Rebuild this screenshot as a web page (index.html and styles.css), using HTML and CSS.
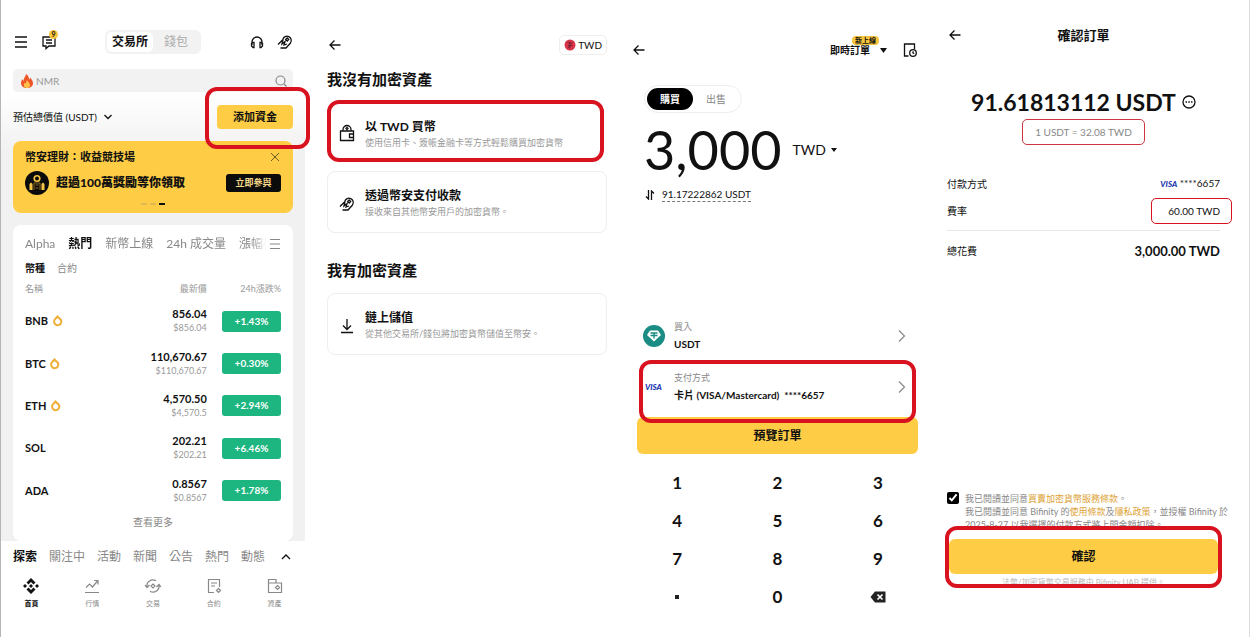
FILE: index.html
```html
<!DOCTYPE html>
<html lang="zh-Hant">
<head>
    <meta charset="UTF-8">
    <title>添加資金</title>
    <link rel="stylesheet" href="styles.css">
</head>
<body>
    <div class="screens">

        <!-- home -->
        <section class="screen home">
            <div class="home-top">
                <header class="home-header">
                    <div class="group">
                        <button class="icon-btn" aria-label="選單">
                            <svg width="16" height="16" viewBox="0 0 16 16" class="line"><path d="M2 3h12M2 8h12M2 13h12"/></svg>
                        </button>
                        <button class="icon-btn chat" aria-label="訊息">
                            <svg width="16" height="16" viewBox="0 0 16 16" class="line"><path d="M2 3h12v9H8l-3 2.500V12H2zM5 6h6M5 9h6"/></svg>
                            <span class="count">9</span>
                        </button>
                    </div>
                    <div class="switch">
                        <button class="active">交易所</button>
                        <button>錢包</button>
                    </div>
                    <div class="group right">
                        <button class="icon-btn" aria-label="客服">
                            <svg width="16" height="16" viewBox="0 0 16 16" class="line"><path d="M3 11V8a5 5 0 0 1 10 0v3M3 8.500h2v5H4L2.500 12V9.500zM13 8.500h-2v5h1l1.500-1.500V9.500z"/></svg>
                        </button>
                        <button class="icon-btn" aria-label="支付">
                            <svg width="16" height="16" viewBox="0 0 16 16" class="line"><path d="M1 10.500L6 5.500M5.800 5.500a4.300 4.300 0 1 1 7.700 3.500L9 14H3.500M6 5.500L5 10l3-2.500L7 11l3-1M10.200 4l1.500 1.500L10.200 7 8.700 5.500z"/></svg>
                        </button>
                    </div>
                </header>
                <div class="search">
                    <svg width="12" height="14" viewBox="0 0 12 14"><path d="M5 0c3 2 3 4 3 5.500.7-.4 1-1.200 1-2 2 2 3 4 3 5.700C12 12 9.500 14 6 14S0 12 0 9c0-2 1-3 1.700-4 .2 1 .5 1.500 1 1.800C2.500 4 4.500 3 5 0z" fill="#ee5527"/><path d="M6 6c.5 1.500 3 3 3 5 0 1.700-1.200 3-3 3s-3.200-1.200-3.200-3c0-1.200.6-1.900 1.200-2.500.3.8.6 1 1 1.200C5 8.500 5.200 7 6 6z" fill="#ffc34a"/></svg>
                    <input type="text" placeholder="NMR" aria-label="搜尋">
                    <svg width="14" height="14" viewBox="0 0 14 14" class="line grey"><circle cx="6.500" cy="6.500" r="4.500"/><path d="M10 10l2.500 2.500"/></svg>
                </div>
            </div>

            <div class="home-body">
                <div class="balance">
                    <button class="balance-label">預估總價值 (USDT)
                        <svg width="10" height="10" viewBox="0 0 10 10" class="line"><path d="M1.500 3l3.500 3.500L8.500 3"/></svg>
                    </button>
                    <div class="marked"><button class="add-funds">添加資金</button></div>
                </div>

                <div class="banner">
                    <div class="banner-title">
                        <span>幣安理財：收益競技場</span>
                        <button class="icon-btn" aria-label="關閉">
                            <svg width="12" height="12" viewBox="0 0 12 12" class="line thin"><path d="M2 2l8 8M10 2l-8 8"/></svg>
                        </button>
                    </div>
                    <div class="banner-main">
                        <svg width="24" height="24" viewBox="0 0 24 24"><circle cx="12" cy="12" r="12" fill="#0b0b0b"/><circle cx="12" cy="7.500" r="2.800" fill="none" stroke="#f6c544" stroke-width="1.600"/><path d="M4.500 19v-6l1.500-1.500L7.500 13v6M16.500 19v-6l1.500-1.500 1.500 1.500v6" fill="#f6c544"/><path d="M9 19v-7h6v7M10.500 14h3M10.500 17h3" stroke="#8b6c22" fill="none"/></svg>
                        <strong>超過100萬獎勵等你領取</strong>
                        <button>立即參與</button>
                    </div>
                    <div class="dots"><i></i><i></i><i class="on"></i></div>
                </div>

                <div class="market">
                    <div class="market-tabs">
                        <div class="tabs fade">
                            <button>Alpha</button>
                            <button class="active">熱門</button>
                            <button>新幣上線</button>
                            <button>24h 成交量</button>
                            <button>漲幅榜</button>
                        </div>
                        <button class="icon-btn" aria-label="更多">
                            <svg width="12" height="12" viewBox="0 0 12 12" class="line grey"><path d="M1 1.500h10M1 6h10M1 10.500h10"/></svg>
                        </button>
                    </div>
                    <div class="tabs small">
                        <button class="active">幣種</button>
                        <button>合約</button>
                    </div>
                    <table>
                        <thead>
                            <tr><th>名稱</th><th>最新價</th><th>24h漲跌%</th></tr>
                        </thead>
                        <tbody>
                            <tr>
                                <td>BNB <svg width="10" height="12" viewBox="0 0 10 12" class="hot"><path d="M4.500 1.500L6 3.200a3.600 3.600 0 1 1-3.500.5z"/></svg></td>
                                <td>856.04<small>$856.04</small></td>
                                <td><span class="change">+1.43%</span></td>
                            </tr>
                            <tr>
                                <td>BTC <svg width="10" height="12" viewBox="0 0 10 12" class="hot"><path d="M4.500 1.500L6 3.200a3.600 3.600 0 1 1-3.500.5z"/></svg></td>
                                <td>110,670.67<small>$110,670.67</small></td>
                                <td><span class="change">+0.30%</span></td>
                            </tr>
                            <tr>
                                <td>ETH <svg width="10" height="12" viewBox="0 0 10 12" class="hot"><path d="M4.500 1.500L6 3.200a3.600 3.600 0 1 1-3.500.5z"/></svg></td>
                                <td>4,570.50<small>$4,570.5</small></td>
                                <td><span class="change">+2.94%</span></td>
                            </tr>
                            <tr>
                                <td>SOL</td>
                                <td>202.21<small>$202.21</small></td>
                                <td><span class="change">+6.46%</span></td>
                            </tr>
                            <tr>
                                <td>ADA</td>
                                <td>0.8567<small>$0.8567</small></td>
                                <td><span class="change">+1.78%</span></td>
                            </tr>
                        </tbody>
                    </table>
                    <button class="more">查看更多</button>
                </div>
            </div>

            <div class="discover">
                <div class="tabs">
                    <button class="active">探索</button>
                    <button>關注中</button>
                    <button>活動</button>
                    <button>新聞</button>
                    <button>公告</button>
                    <button>熱門</button>
                    <button>動態</button>
                </div>
                <button class="icon-btn" aria-label="展開">
                    <svg width="12" height="12" viewBox="0 0 12 12" class="line"><path d="M2 8l4-4 4 4"/></svg>
                </button>
            </div>
            <nav class="bottom-nav">
                <a href="#" class="active">
                    <svg width="16" height="16" viewBox="0 0 16 16" fill="#111"><path d="M8 0l4.500 4.500-2 2L8 4 5.500 6.500l-2-2zM8 16l4.500-4.500-2-2L8 12 5.500 9.500l-2 2zM8 6l2 2-2 2-2-2zM2 6l2 2-2 2-2-2zM14 6l2 2-2 2-2-2z"/></svg>
                    首頁
                </a>
                <a href="#">
                    <svg width="16" height="16" viewBox="0 0 16 16" class="line grey"><path d="M1 14.500h14M2 9.500l3.500-3.500 3 3 5-6M10 2.500h4v4"/></svg>
                    行情
                </a>
                <a href="#">
                    <svg width="18" height="16" viewBox="0 0 18 16" class="line grey"><path d="M3 9a6 6 0 0 1 9-6.200M15 7a6 6 0 0 1-9 6.200M1 7l2 2.500L5.500 7M12.500 9L15 6.500 17 9M9 6l2 2-2 2-2-2z"/></svg>
                    交易
                </a>
                <a href="#">
                    <svg width="16" height="16" viewBox="0 0 16 16" class="line grey"><path d="M8 14.500H2.500v-13h11V9M5 5h6M5 8h4M12.500 10.500l2 2-2 2-2-2z"/></svg>
                    合約
                </a>
                <a href="#">
                    <svg width="16" height="16" viewBox="0 0 16 16" class="line grey"><path d="M1.500 5h13v9.500h-13v-13H9V5M10.500 7.500l2 2-2 2-2-2z"/></svg>
                    資產
                </a>
            </nav>
        </section>

        <!-- funding method -->
        <section class="screen method">
            <header class="bar">
                <button class="icon-btn" aria-label="返回">
                    <svg width="16" height="16" viewBox="0 0 16 16" class="line"><path d="M13.500 8H3M7.500 3.500L3 8l4.500 4.500"/></svg>
                </button>
                <button class="currency">
                    <svg width="12" height="12" viewBox="0 0 12 12"><circle cx="6" cy="6" r="5.500" fill="#d8354a"/><path d="M3.500 4h5M4 6.500h4.500M6 2.500v7M4 9l2-2.500" stroke="#7c2130" fill="none"/></svg>
                    TWD
                </button>
            </header>
            <h2>我沒有加密資產</h2>
            <a href="#" class="option highlight">
                <svg width="16" height="18" viewBox="0 0 16 18" class="line"><path d="M1.500 7h13v9.500h-13zM4 7V5.500a4 4 0 0 1 8 0V7M14.500 10h-4v3.500h4M8 3.500l1 1-1 1-1-1z"/></svg>
                <span class="option-text"><b>以 TWD 買幣</b><small>使用信用卡、簽帳金融卡等方式輕鬆購買加密貨幣</small></span>
            </a>
            <a href="#" class="option">
                <svg width="16" height="16" viewBox="0 0 16 16" class="line"><path d="M1 10.500L6 5.500M5.800 5.500a4.300 4.300 0 1 1 7.700 3.500L9 14H3.500M6 5.500L5 10l3-2.500L7 11l3-1M10.200 4l1.500 1.500L10.200 7 8.700 5.500z"/></svg>
                <span class="option-text"><b>透過幣安支付收款</b><small>接收來自其他幣安用戶的加密貨幣。</small></span>
            </a>
            <h2>我有加密資產</h2>
            <a href="#" class="option">
                <svg width="16" height="16" viewBox="0 0 16 16" class="line"><path d="M8 1v10M4 7.500L8 11.500l4-4M2 14.500h12"/></svg>
                <span class="option-text"><b>鏈上儲值</b><small>從其他交易所/錢包將加密貨幣儲值至幣安。</small></span>
            </a>
        </section>

        <!-- buy -->
        <section class="screen buy">
            <header class="bar">
                <button class="icon-btn" aria-label="返回">
                    <svg width="16" height="16" viewBox="0 0 16 16" class="line"><path d="M13.500 8H3M7.500 3.500L3 8l4.500 4.500"/></svg>
                </button>
                <div class="group">
                    <button class="order-type">即時訂單<span class="new">新上線</span>
                        <svg width="7" height="5" viewBox="0 0 7 5"><path d="M0 0h7L3.500 5z" fill="#111"/></svg>
                    </button>
                    <button class="icon-btn" aria-label="歷史訂單">
                        <svg width="16" height="16" viewBox="0 0 16 16" class="line"><path d="M6.500 14H2.500V2h10v5"/><circle cx="11" cy="11" r="3.300"/><path d="M11 9.200V11l1.200.8"/></svg>
                    </button>
                </div>
            </header>
            <div class="side">
                <button class="active">購買</button>
                <button>出售</button>
            </div>
            <div class="amount">
                <span class="value">3,000</span>
                <button class="unit">TWD
                    <svg width="6" height="4" viewBox="0 0 6 4"><path d="M0 0h6L3 4z" fill="#111"/></svg>
                </button>
            </div>
            <div class="converted">
                <svg width="10" height="10" viewBox="0 0 10 10" class="line"><path d="M3.500 0v9L1 6.500M6.500 10V1L9 3.500"/></svg>
                <span>91.17222862 USDT</span>
            </div>

            <div class="buy-bottom">
                <a href="#" class="field">
                    <svg width="22" height="22" viewBox="0 0 22 22"><circle cx="11" cy="11" r="11" fill="#1a8c84"/><path d="M7 5.500h8l3 4.500-7 6.500L4 10z" fill="#fff"/><path d="M7.500 8h7M11 8v5.500M7.500 10.500h7" stroke="#1a8c84" stroke-width="1.400" fill="none"/></svg>
                    <span class="field-text"><small>買入</small><b>USDT</b></span>
                    <svg width="10" height="14" viewBox="0 0 10 14" class="line grey"><path d="M2 1.500L7.500 7 2 12.500"/></svg>
                </a>
                <a href="#" class="field highlight">
                    <span class="visa">VISA</span>
                    <span class="field-text"><small>支付方式</small><b>卡片 (VISA/Mastercard)&nbsp; ****6657</b></span>
                    <svg width="10" height="14" viewBox="0 0 10 14" class="line grey"><path d="M2 1.500L7.500 7 2 12.500"/></svg>
                </a>
                <button class="primary preview">預覽訂單</button>
                <div class="keypad">
                    <button>1</button><button>2</button><button>3</button>
                    <button>4</button><button>5</button><button>6</button>
                    <button>7</button><button>8</button><button>9</button>
                    <button aria-label="小數點"><svg width="4" height="4" viewBox="0 0 4 4"><path d="M0 0h4v4H0z" fill="#222"/></svg></button>
                    <button>0</button>
                    <button aria-label="刪除"><svg width="16" height="12" viewBox="0 0 16 12"><path d="M5 .5h10.500v11H5L.5 6z" fill="#222"/><path d="M7.500 3.500l5 5M12.500 3.500l-5 5" stroke="#fff" stroke-width="1.600"/></svg></button>
                </div>
            </div>
        </section>

        <!-- confirm -->
        <section class="screen confirm">
            <header class="bar">
                <button class="icon-btn" aria-label="返回">
                    <svg width="16" height="16" viewBox="0 0 16 16" class="line"><path d="M13.500 8H3M7.500 3.500L3 8l4.500 4.500"/></svg>
                </button>
                <h1>確認訂單</h1>
            </header>
            <div class="receive">
                <strong>91.61813112 USDT</strong>
                <svg width="14" height="14" viewBox="0 0 14 14" class="line"><circle cx="7" cy="7" r="6"/><path d="M3.500 7H5M6.300 7h1.500M9 7h1.500"/></svg>
            </div>
            <div class="rate">1 USDT = 32.08 TWD</div>
            <dl>
                <div><dt>付款方式</dt><dd><span class="visa">VISA</span> ****6657</dd></div>
                <div><dt>費率</dt><dd><span class="fee">60.00 TWD</span></dd></div>
                <div class="total"><dt>總花費</dt><dd>3,000.00 TWD</dd></div>
            </dl>
            <div class="confirm-bottom">
                <div class="agree">
                    <input type="checkbox" id="agree" checked>
                    <label for="agree">我已閱讀並同意<a href="#">買賣加密貨幣服務條款</a>。<br>我已閱讀並同意 Bifinity 的<a href="#">使用條款</a>及<a href="#">隱私政策</a>，並授權 Bifinity 於<br>2025-8-27 以我選擇的付款方式將上開金額扣除。</label>
                </div>
                <div class="submit highlight">
                    <button class="primary">確認</button>
                    <p>法幣/加密貨幣交易服務由 Bifinity UAB 提供。</p>
                </div>
            </div>
        </section>

    </div>
</body>
</html>
```

FILE: styles.css
```css
* {
    box-sizing: border-box;
}

body {
    margin: 0;
    background: #fff;
    color: #111;
    font-family: Lato, "Noto Sans CJK TC", sans-serif;
    font-size: 10px;
    line-height: 16px;
}

button,
input {
    margin: 0;
    padding: 0;
    border: 0;
    background: none;
    color: inherit;
    font: inherit;
}

button {
    white-space: nowrap;
}

a {
    color: inherit;
    text-decoration: none;
}

svg {
    flex: none;
    display: block;
}

.line {
    fill: none;
    stroke: #111;
    stroke-width: 1.3;
}

.line.thin {
    stroke: #6b5a24;
    stroke-width: 1;
}

.line.grey {
    stroke: #888;
    stroke-width: 1.2;
}

.screens {
    display: grid;
    grid-template-columns: 304fr 320fr 310fr 314fr;
    min-height: 100vh;
    border-left: 1px solid #b5b5b5;
    border-right: 1px solid #ddd;
}

.screen {
    display: flex;
    flex-direction: column;
    min-width: 0;
}

.group {
    display: flex;
    align-items: center;
    gap: 12px;
}

.bar {
    display: flex;
    align-items: center;
    justify-content: space-between;
    height: 20px;
}

.highlight {
    border: 4px solid #d9121f;
    border-radius: 12px;
}

.primary {
    width: 100%;
    background: #ffcd45;
    border-radius: 6px;
    font-size: 12px;
    font-weight: bold;
}

.visa {
    color: #2438b0;
    font-size: 8px;
    font-style: italic;
    font-weight: 900;
}

/* home */

.home-top {
    padding: 30px 12px 0;
}

.home-header {
    display: grid;
    grid-template-columns: 1fr auto 1fr;
    align-items: center;
}

.right {
    justify-content: flex-end;
}

.chat {
    position: relative;
}

.count {
    position: absolute;
    top: -4px;
    right: -1px;
    width: 9px;
    border-radius: 5px;
    background: #f8c63c;
    font-size: 7px;
    font-weight: bold;
    line-height: 9px;
    text-align: center;
}

.switch {
    display: flex;
    padding: 2px;
    border-radius: 6px;
    background: #f2f2f2;
    color: #aaa;
    font-size: 12px;
    line-height: 20px;
}

.switch button {
    width: 46px;
    border-radius: 5px;
}

.switch .active {
    background: #fff;
    color: #111;
    font-weight: bold;
}

.search {
    display: flex;
    align-items: center;
    gap: 3px;
    height: 23px;
    margin-top: 15px;
    padding: 0 5px 0 8px;
    border-radius: 5px;
    background: #f2f2f2;
}

.search input {
    flex: 1;
    min-width: 0;
    outline: none;
}

.search input::placeholder {
    color: #999;
}

.home-body {
    padding: 13px 12px 0;
    background: linear-gradient(#fff, #f1f1f2 60px);
}

.balance {
    display: flex;
    align-items: center;
    justify-content: space-between;
}

.balance-label {
    display: flex;
    align-items: center;
    gap: 6px;
}

.marked {
    position: relative;
}

.marked::after {
    content: "";
    position: absolute;
    inset: -18px -17px -20px -12px;
    border: 4px solid #d9121f;
    border-radius: 12px;
    pointer-events: none;
}

.add-funds {
    width: 76px;
    border-radius: 4px;
    background: #ffcd45;
    font-size: 11px;
    font-weight: bold;
    line-height: 24px;
}

.banner {
    margin-top: 12px;
    padding: 8px 12px;
    border-radius: 8px;
    background: #ffcd45;
    font-size: 11px;
    font-weight: bold;
}

.banner-title,
.banner-main {
    display: flex;
    align-items: center;
    justify-content: space-between;
}

.banner-main {
    gap: 7px;
    margin-top: 6px;
    font-size: 12px;
}

.banner-main strong {
    flex: 1;
    white-space: nowrap;
}

.banner-main button {
    width: 55px;
    border-radius: 3px;
    background: #0b0b0b;
    color: #f6d98a;
    font-size: 9px;
    line-height: 18px;
}

.dots {
    display: flex;
    justify-content: center;
    gap: 3px;
    margin-top: 8px;
}

.dots i {
    width: 6px;
    height: 2px;
    background: #dfb950;
}

.dots .on {
    background: #111;
}

.market {
    margin-top: 12px;
    padding: 10px 12px 9px;
    border-radius: 8px;
    background: #fff;
}

.market-tabs,
.discover {
    display: flex;
    align-items: center;
    justify-content: space-between;
}

.tabs {
    display: flex;
    gap: 12px;
    color: #888;
    font-size: 12px;
    line-height: 18px;
}

.tabs.fade {
    gap: 13px;
    width: 241px;
    overflow: hidden;
    mask-image: linear-gradient(90deg, #000 94%, transparent);
}

.tabs.small {
    margin-top: 8px;
    font-size: 10px;
    line-height: 14px;
}

.tabs .active {
    color: #111;
    font-weight: bold;
}

table {
    width: 100%;
    height: 237px;
    border-collapse: collapse;
    table-layout: fixed;
    line-height: 14px;
}

th,
td {
    padding: 0;
    text-align: right;
}

th {
    height: 25px;
    padding-top: 3px;
    color: #999;
    font-size: 9px;
    font-weight: normal;
}

th:first-child,
td:first-child {
    width: 33%;
    text-align: left;
}

th:last-child {
    width: 29%;
}

td {
    font-size: 11px;
    font-weight: bold;
}

td small {
    display: block;
    color: #999;
    font-size: 9px;
    font-weight: normal;
}

.hot {
    display: inline-block;
    margin-left: 2px;
    vertical-align: -2px;
    fill: #fff;
    stroke: #eeae35;
    stroke-width: 2;
}

.change {
    display: inline-block;
    width: 59px;
    border-radius: 3px;
    background: #1eb680;
    color: #fff;
    font-size: 10px;
    line-height: 21px;
    text-align: center;
}

.more {
    display: block;
    margin: 0 auto;
    color: #888;
    line-height: 20px;
}

.discover {
    padding: 7px 13px 0 12px;
}

.bottom-nav {
    display: grid;
    grid-template-columns: repeat(5, 1fr);
    margin-top: 12px;
    color: #888;
    font-size: 7px;
    line-height: 10px;
}

.bottom-nav a {
    display: flex;
    flex-direction: column;
    align-items: center;
    gap: 4px;
}

.bottom-nav .active {
    color: #111;
    font-weight: bold;
}

/* funding method */

.method {
    padding: 35px 18px 0 22px;
}

.currency {
    display: flex;
    align-items: center;
    gap: 2px;
    height: 20px;
    padding: 0 4px;
    border: 1px solid #eee;
    border-radius: 5px;
}

.method h2 {
    margin: 14px 0 11px;
    font-size: 15px;
    line-height: 20px;
}

.option {
    display: flex;
    align-items: center;
    gap: 10px;
    height: 62px;
    padding: 4px 11px 0;
    border: 1px solid #eee;
    border-radius: 8px;
}

.option.highlight {
    margin-right: 3px;
    padding: 4px 8px 0;
    border: 4px solid #d9121f;
    border-radius: 12px;
}

.option.highlight .option-text {
    padding-top: 3px;
}

.option + .option {
    margin-top: 9px;
}

.option + h2 {
    margin-top: 27px;
    margin-bottom: 13px;
}

.option-text b,
.option-text small,
.field-text b,
.field-text small {
    display: block;
}

.option-text b {
    font-size: 12px;
}

.option-text small {
    color: #999;
    font-size: 9px;
    white-space: nowrap;
}

/* buy */

.buy {
    padding: 40px 17px 21px 12px;
}

.buy .bar {
    margin-left: -6px;
}

.buy .group {
    gap: 15px;
}

.order-type {
    position: relative;
    display: flex;
    align-items: center;
    gap: 5px;
    font-weight: bold;
}

.new {
    position: absolute;
    top: -6px;
    left: 22px;
    padding: 0 3px;
    border-radius: 4px;
    background: #f8c63c;
    font-size: 7px;
    line-height: 9px;
}

.side {
    display: flex;
    align-self: flex-start;
    margin: 25px 0 0 7px;
    padding: 2px;
    border: 1px solid #eee;
    border-radius: 14px;
    color: #888;
    line-height: 22px;
}

.side button {
    width: 46px;
    border-radius: 11px;
}

.side .active {
    background: #000;
    color: #fff;
    font-weight: bold;
}

.amount {
    display: flex;
    align-items: center;
    gap: 11px;
    margin: 9px 0 0 7px;
}

.value {
    font-size: 54px;
    line-height: 56px;
}

.unit {
    display: flex;
    align-items: center;
    gap: 5px;
    font-size: 14px;
}

.converted {
    display: flex;
    align-items: center;
    gap: 7px;
    margin: 10px 0 0 8px;
    line-height: 13px;
}

.converted span {
    border-bottom: 1px dashed #777;
}

.buy-bottom {
    margin-top: auto;
}

.field {
    display: flex;
    align-items: center;
    gap: 9px;
    height: 48px;
    padding: 0 11px 0 6px;
}

.field-text {
    flex: 1;
    padding-bottom: 3px;
}

.field-text small {
    color: #888;
    font-size: 9px;
    line-height: 18px;
}

.field.highlight {
    position: relative;
    height: 63px;
    margin: 0 2px;
    padding: 0 5px 9px 2px;
}

.field .visa {
    width: 20px;
}

.preview {
    margin-top: -6px;
    line-height: 37px;
}

.keypad {
    display: grid;
    grid-template-columns: repeat(3, 1fr);
    margin: 10px -10px 0;
    font-size: 17px;
    font-weight: bold;
    line-height: 38px;
}

.keypad button {
    display: flex;
    align-items: center;
    justify-content: center;
    height: 38px;
}

/* confirm */

.confirm {
    padding: 25px 29px 49px 12px;
}

.confirm .bar {
    display: grid;
    grid-template-columns: 16px 1fr 16px;
}

.confirm h1 {
    margin: 0;
    font-size: 13px;
    text-align: center;
}

.receive {
    display: flex;
    align-items: center;
    justify-content: center;
    gap: 6px;
    margin-top: 43px;
    font-size: 23px;
    line-height: 28px;
}

.rate {
    align-self: center;
    margin-top: 3px;
    padding: 0 12px;
    border: 1px solid #d03642;
    border-radius: 5px;
    color: #888;
    line-height: 24px;
}

dl {
    margin: 25px 0 0;
}

dl div {
    display: flex;
    align-items: center;
    justify-content: space-between;
    height: 27px;
}

dd {
    margin: 0;
}

.fee {
    display: block;
    margin-right: -12px;
    padding: 0 11px 0 16px;
    border: 1px solid #d9121f;
    border-radius: 5px;
    line-height: 24px;
}

dl .total {
    height: 40px;
    margin-top: 6px;
    border-top: 1px solid #e6e6e6;
}

.total dd {
    font-size: 13px;
    font-weight: bold;
}

.confirm-bottom {
    margin-top: auto;
}

.agree {
    display: flex;
    gap: 6px;
    margin-bottom: -5px;
    color: #888;
    font-size: 9px;
    line-height: 13px;
    white-space: nowrap;
}

.agree input {
    flex: none;
    width: 12px;
    height: 12px;
    accent-color: #000;
}

.agree a {
    color: #dda233;
}

.submit {
    position: relative;
    height: 62px;
    margin: 0 -2px;
    padding-top: 9px;
    overflow: hidden;
    background: #fff;
}

.submit .primary {
    line-height: 35px;
}

.submit p {
    margin: 0;
    color: #bbb;
    font-size: 8px;
    text-align: center;
}
```
